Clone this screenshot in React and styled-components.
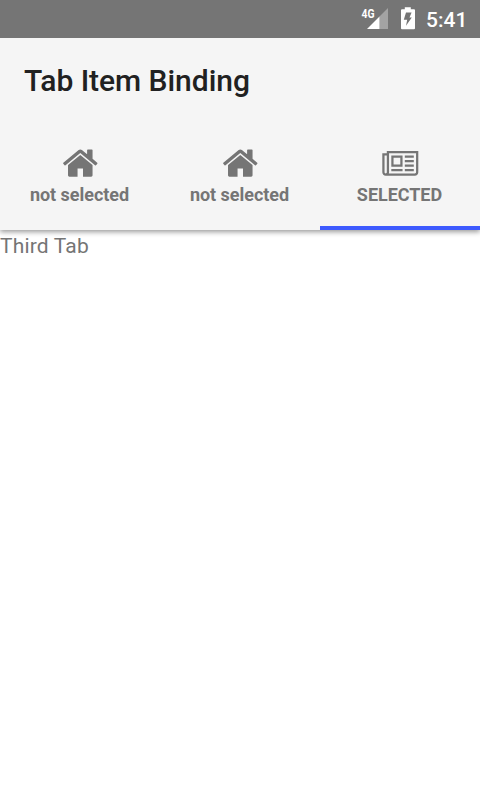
import React from "react";
import styled, { createGlobalStyle } from "styled-components";

const GlobalStyle = createGlobalStyle`
  * { box-sizing: border-box; }
  body { margin: 0; background: #fff; font-family: Roboto, sans-serif; }
`;
const Screen = styled.div`
  width: 480px;
  height: 800px;
  display: flex;
  flex-direction: column;
  background: #fff;
  overflow: hidden;
`;
const StatusBar = styled.div`
  height: 38px;
  flex: none;
  display: flex;
  justify-content: flex-end;
  background: #757575;
`;
const StatusIcons = styled.svg`
  width: 66px;
  height: 38px;
  display: block;
  text {
    font: 700 12.5px Roboto, sans-serif;
  }
`;
const Clock = styled.span`
  width: 54px;
  color: #fff;
  font-size: 21px;
  font-weight: 500;
  line-height: 38px;
  padding-top: 1px;
  white-space: nowrap;
`;
const Header = styled.header`
  height: 192px;
  flex: none;
  display: flex;
  flex-direction: column;
  background: #f5f5f5;
  box-shadow: 0 2px 5px rgba(0, 0, 0, 0.4);
  clip-path: inset(0 0 -8px 0);
`;
const Title = styled.h1`
  height: 84px;
  margin: 0;
  padding: 1px 0 0 24px;
  color: #212121;
  font-size: 30px;
  font-weight: 500;
  line-height: 84px;
  letter-spacing: -0.04px;
`;
const Tabs = styled.nav`
  height: 108px;
  display: grid;
  grid-template-columns: repeat(3, 1fr);
`;
const Tab = styled.div`
  display: flex;
  flex-direction: column;
  align-items: center;
  padding-top: 21px;
  border-bottom: 4px solid ${(p) => (p.$active ? "#3d5afe" : "transparent")};
`;
const TabIcon = styled.svg`
  display: block;
  width: 40px;
  height: 40px;
  fill: #757575;
`;
const TabLabel = styled.span`
  color: #757575;
  font-size: 18px;
  font-weight: 700;
  line-height: 24px;
  letter-spacing: -0.04px;
  padding-right: 1px;
`;
const Content = styled.main`
  padding-top: 4px;
  color: #757575;
  font-size: 21px;
  line-height: 25px;
  letter-spacing: 0.17px;
`;

function HomeIcon() {
  return (
    <TabIcon viewBox="0 0 40 40">
      <path transform="translate(1.2 1) scale(.0213)" d="M1472 992v480q0 26-19 45t-45 19h-384v-384h-256v384h-384q-26 0-45-19t-19-45v-480q0-1 .5-3t.5-3l575-474 575 474q1 2 1 6zm223-69l-62 74q-8 9-21 11h-3q-13 0-21-7l-692-577-692 577q-12 8-24 7-13-2-21-11l-62-74q-8-10-7-23.5t11-21.5l719-599q32-26 76-26t76 26l244 204v-195q0-14 9-23t23-9h192q14 0 23 9t9 23v408l219 182q10 8 11 21.5t-7 23.5z" />
    </TabIcon>
  );
}

function NewsIcon() {
  return (
    <TabIcon viewBox="0 0 40 40">
      <path transform="translate(2.3 5.7) scale(.01758)" d="M1024 512h-384v384h384v-384zm128 640v128h-640v-128h640zm0-768v640h-640v-640h640zm640 768v128h-512v-128h512zm0-256v128h-512v-128h512zm0-256v128h-512v-128h512zm0-256v128h-512v-128h512zm-1536 960v-960h-128v960q0 26 19 45t45 19 45-19 19-45zm1664 0v-1088h-1536v1088q0 33-11 64h1483q26 0 45-19t19-45zm128-1216v1216q0 80-56 136t-136 56h-1664q-80 0-136-56t-56-136v-1088h256v-128h1792z" />
    </TabIcon>
  );
}

export default function App() {
  return (
    <Screen>
      <GlobalStyle />
      <StatusBar>
        <StatusIcons viewBox="0 0 66 38" fill="#fff">
          <path d="M28 8V29H19.5V16.5Z" fill="#a3a3a3" />
          <path d="M19.5 16.5V29H7Z" />
          <text x="1.5" y="17.6" textLength="13" lengthAdjust="spacingAndGlyphs">4G</text>
          <path fillRule="evenodd" d="M44.8 7.2h6v2h3.2q1 0 1 1v18q0 1-1 1H42q-1 0-1-1v-18q0-1 1-1h2.8zM46 12.5h5.6l-2.1 5h2.3l-5.8 8.3 1.2-6h-3.4z" />
        </StatusIcons>
        <Clock>5:41</Clock>
      </StatusBar>
      <Header>
        <Title>Tab Item Binding</Title>
        <Tabs>
          <Tab><HomeIcon /><TabLabel>not selected</TabLabel></Tab>
          <Tab><HomeIcon /><TabLabel>not selected</TabLabel></Tab>
          <Tab $active><NewsIcon /><TabLabel>SELECTED</TabLabel></Tab>
        </Tabs>
      </Header>
      <Content>Third Tab</Content>
    </Screen>
  );
}
